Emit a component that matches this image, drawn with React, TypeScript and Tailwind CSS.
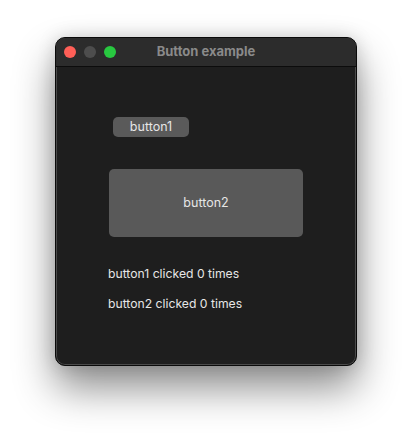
export default function App() {
  return (
    <div className="w-[412px] h-[440px] bg-white pt-[37px] pl-[55px] font-['Inter',sans-serif]">
      {/* WINDOW */}
      <div className="w-[302px] h-[329px] rounded-[10px] bg-[#1e1e1e] border border-[#0a0a0a] ring-1 ring-inset ring-[#4a4a4a] shadow-[0_22px_40px_rgba(0,0,0,0.45),0_0_18px_rgba(0,0,0,0.15)] overflow-hidden flex flex-col">
        {/* TITLE BAR */}
        <div className="relative h-[29px] bg-[#2c2c2c] border-b border-[#0c0c0c] flex items-center shrink-0">
          <div className="flex items-center gap-2 pl-[8px]">
            <span className="w-3 h-3 rounded-full bg-[#ff5f57]" />
            <span className="w-3 h-3 rounded-full bg-[#4d4d4d]" />
            <span className="w-3 h-3 rounded-full bg-[#28c840]" />
          </div>
          <div className="absolute inset-0 flex items-center justify-center text-[13px] font-bold text-[#8a8a8a]">
            Button example
          </div>
        </div>

        {/* BODY */}
        <div className="flex-1 flex flex-col text-[#e6e6e6] text-[12.2px] leading-[16px]">
          <button className="mt-[50px] ml-[57px] w-[76px] h-[20px] rounded-[5px] bg-[#5a5a5a] text-[#e6e6e6] text-[12.5px]">
            button1
          </button>
          <button className="mt-[32px] ml-[53px] w-[194px] h-[68px] rounded-[5px] bg-[#595959] text-[#e6e6e6] text-[12.5px]">
            button2
          </button>
          <p className="mt-[29px] ml-[52px]">button1 clicked 0 times</p>
          <p className="mt-[14px] ml-[52px]">button2 clicked 0 times</p>
        </div>
      </div>
    </div>
  )
}
